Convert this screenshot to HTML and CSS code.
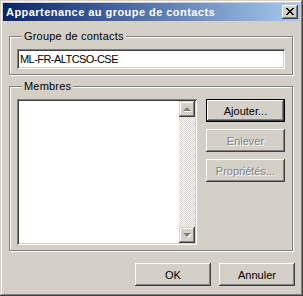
FILE: index.html
```html
<!DOCTYPE html>
<html lang="fr">
<head>
<meta charset="utf-8">
<title>Appartenance au groupe de contacts</title>
<link rel="stylesheet" href="styles.css">
</head>
<body>
<div class="window">
  <div class="titlebar">
    <span class="title">Appartenance au groupe de contacts</span>
    <div class="close">
      <svg width="8" height="7" viewBox="0 0 8 7" shape-rendering="crispEdges">
        <path d="M0 0h2v1H0zM6 0h2v1H6zM1 1h2v1H1zM5 1h2v1H5zM2 2h4v1H2zM3 3h2v1H3zM2 4h4v1H2zM1 5h2v1H1zM5 5h2v1H5zM0 6h2v1H0zM6 6h2v1H6z" fill="#000"/>
      </svg>
    </div>
  </div>
  <div class="body">
    <fieldset class="group group-contacts">
      <legend>Groupe de contacts</legend>
      <div class="textbox">ML-FR-ALTCSO-CSE</div>
    </fieldset>
    <fieldset class="group group-members">
      <legend>Membres</legend>
      <div class="members">
        <div class="listbox">
          <div class="list"></div>
          <div class="scrollbar">
            <div class="sbtn"><span class="arrow up"></span></div>
            <div class="track"></div>
            <div class="sbtn"><span class="arrow down"></span></div>
          </div>
        </div>
        <div class="actions">
          <div class="btn default">Ajouter...</div>
          <div class="btn disabled">Enlever</div>
          <div class="btn disabled">Propriétés...</div>
        </div>
      </div>
    </fieldset>
    <div class="footer">
      <div class="btn wide">OK</div>
      <div class="btn wide">Annuler</div>
    </div>
  </div>
</div>
</body>
</html>
```
FILE: styles.css
```css
* { box-sizing: border-box; }
html, body { margin: 0; padding: 0; background: #d4d0c8; }
body {
  font-family: "Liberation Sans", Arial, sans-serif;
  font-size: 11px;
  color: #000;
}
.window {
  width: 303px;
  height: 296px;
  padding: 3px;
  background: #d4d0c8;
  box-shadow: inset -1px -1px #404040, inset 1px 1px #d4d0c8,
              inset -2px -2px #808080, inset 2px 2px #fff;
  display: flex;
  flex-direction: column;
}
.titlebar {
  height: 18px;
  flex: none;
  background: linear-gradient(to right, #0a246a, #a6caf0);
  display: flex;
  align-items: center;
  padding: 0 2px 0 3px;
}
.title {
  flex: 1;
  color: #fff;
  font-weight: bold;
  font-size: 11px;
  letter-spacing: 0.45px;
  line-height: 18px;
  white-space: nowrap;
}
.close {
  width: 16px;
  height: 14px;
  background: #d4d0c8;
  box-shadow: inset -1px -1px #404040, inset 1px 1px #fff,
              inset -2px -2px #808080, inset 2px 2px #d4d0c8;
  display: flex;
  align-items: center;
  justify-content: center;
}
.close svg { display: block; margin-top: -1px; }
.body {
  flex: 1;
  padding: 9px 7px 0 6px;
  display: flex;
  flex-direction: column;
}
.group {
  margin: 0;
  padding: 0 7px;
  border: 1px solid #808080;
  box-shadow: 1px 1px 0 #fff, inset 1px 1px 0 #fff;
  min-width: 0;
  flex: none;
}
.group legend {
  margin-left: 5px;
  padding: 0 2px;
  line-height: 13px;
  height: 13px;
  background: #d4d0c8;
  letter-spacing: 0.2px;
}
.group-contacts { height: 45px; padding-top: 6px; }
.textbox {
  width: 268px;
  height: 20px;
  background: #fff;
  box-shadow: inset 1px 1px #808080, inset -1px -1px #fff,
              inset 2px 2px #404040, inset -2px -2px #d4d0c8;
  padding: 0 3px;
  line-height: 20px;
  letter-spacing: -0.55px;
  white-space: nowrap;
}
.group-members { margin-top: 5px; height: 171px; padding-top: 6px; }
.members { display: flex; gap: 9px; }
.listbox {
  width: 180px;
  height: 146px;
  background: #fff;
  padding: 2px;
  box-shadow: inset 1px 1px #808080, inset -1px -1px #fff,
              inset 2px 2px #404040, inset -2px -2px #d4d0c8;
  display: flex;
}
.list { flex: 1; }
.scrollbar { width: 16px; display: flex; flex-direction: column; }
.track {
  flex: 1;
  background: repeating-conic-gradient(#fff 0 25%, #d4d0c8 0 50%) 0 0 / 2px 2px;
}
.sbtn {
  height: 16px;
  flex: none;
  background: #d4d0c8;
  box-shadow: inset -1px -1px #404040, inset 1px 1px #d4d0c8,
              inset -2px -2px #808080, inset 2px 2px #fff;
  display: flex;
  align-items: center;
  justify-content: center;
}
.arrow {
  width: 0;
  height: 0;
  border-left: 4px solid transparent;
  border-right: 4px solid transparent;
  filter: drop-shadow(1px 1px 0 #fff);
}
.arrow.up { border-bottom: 4px solid #808080; margin-top: -1px; }
.arrow.down { border-top: 4px solid #808080; }
.actions { display: flex; flex-direction: column; gap: 7px; }
.btn {
  width: 79px;
  height: 23px;
  flex: none;
  background: #d4d0c8;
  box-shadow: inset -1px -1px #404040, inset 1px 1px #fff,
              inset -2px -2px #808080, inset 2px 2px #d4d0c8;
  display: flex;
  align-items: center;
  justify-content: center;
  white-space: nowrap;
}
.btn.default {
  box-shadow: inset 0 0 0 1px #000, inset -2px -2px #404040, inset 2px 2px #fff,
              inset -3px -3px #808080;
}
.btn.disabled { color: #808080; text-shadow: 1px 1px 0 #fff; }
.footer {
  margin-top: 12px;
  display: flex;
  justify-content: flex-end;
  gap: 8px;
  margin-right: -2px;
}
.btn.wide { width: 76px; }
```
